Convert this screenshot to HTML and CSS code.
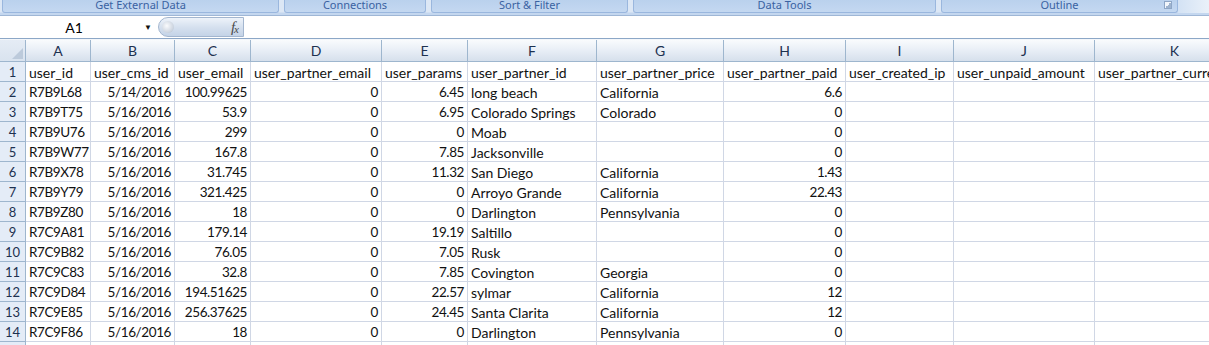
FILE: index.html
```html
<!DOCTYPE html>
<html lang="en">
<head>
    <meta charset="UTF-8">
    <title>Book1 - Sheet1</title>
    <link rel="stylesheet" href="styles.css">
</head>
<body>
    <div class="window">
        <div class="ribbon">
            <div class="group g1"><span>Get External Data</span></div>
            <div class="group g2"><span>Connections</span></div>
            <div class="group g3"><span>Sort &amp; Filter</span></div>
            <div class="group g4"><span>Data Tools</span></div>
            <div class="group g5">
                <span>Outline</span>
                <i class="launcher"></i>
            </div>
            <div class="ribbon-end"></div>
        </div>

        <div class="formula-bar">
            <div class="name-box">
                <span class="cell-ref">A1</span>
                <span class="drop">&#9660;</span>
            </div>
            <div class="fx-pill">
                <span class="bubble"></span>
                <span class="fx">f<sub>x</sub></span>
            </div>
            <div class="formula-input"></div>
        </div>

        <div class="sheet">
            <table class="grid">
                <colgroup>
                    <col class="w-hdr">
                    <col class="w-a">
                    <col class="w-b">
                    <col class="w-c">
                    <col class="w-d">
                    <col class="w-e">
                    <col class="w-f">
                    <col class="w-g">
                    <col class="w-h">
                    <col class="w-i">
                    <col class="w-j">
                    <col class="w-k">
                </colgroup>
                <thead>
                    <tr>
                        <th class="corner">
                            <svg width="11" height="11" viewBox="0 0 11 11"><polygon points="11,0 11,11 0,11" fill="#bccadb"/></svg>
                        </th>
                        <th>A</th><th>B</th><th>C</th><th>D</th><th>E</th><th>F</th>
                        <th>G</th><th>H</th><th>I</th><th>J</th><th>K</th>
                    </tr>
                </thead>
                <tbody>
                    <tr><th>1</th><td>user_id</td><td>user_cms_id</td><td>user_email</td><td>user_partner_email</td><td>user_params</td><td>user_partner_id</td><td>user_partner_price</td><td>user_partner_paid</td><td>user_created_ip</td><td>user_unpaid_amount</td><td class="clip">user_partner_currency</td></tr>
                    <tr><th>2</th><td class="id">R7B9L68</td><td class="num">5/14/2016</td><td class="num">100.99625</td><td class="num">0</td><td class="num">6.45</td><td>long beach</td><td>California</td><td class="num">6.6</td><td></td><td></td><td></td></tr>
                    <tr><th>3</th><td class="id">R7B9T75</td><td class="num">5/16/2016</td><td class="num">53.9</td><td class="num">0</td><td class="num">6.95</td><td>Colorado Springs</td><td>Colorado</td><td class="num">0</td><td></td><td></td><td></td></tr>
                    <tr><th>4</th><td class="id">R7B9U76</td><td class="num">5/16/2016</td><td class="num">299</td><td class="num">0</td><td class="num">0</td><td>Moab</td><td></td><td class="num">0</td><td></td><td></td><td></td></tr>
                    <tr><th>5</th><td class="id">R7B9W77</td><td class="num">5/16/2016</td><td class="num">167.8</td><td class="num">0</td><td class="num">7.85</td><td>Jacksonville</td><td></td><td class="num">0</td><td></td><td></td><td></td></tr>
                    <tr><th>6</th><td class="id">R7B9X78</td><td class="num">5/16/2016</td><td class="num">31.745</td><td class="num">0</td><td class="num">11.32</td><td>San Diego</td><td>California</td><td class="num">1.43</td><td></td><td></td><td></td></tr>
                    <tr><th>7</th><td class="id">R7B9Y79</td><td class="num">5/16/2016</td><td class="num">321.425</td><td class="num">0</td><td class="num">0</td><td>Arroyo Grande</td><td>California</td><td class="num">22.43</td><td></td><td></td><td></td></tr>
                    <tr><th>8</th><td class="id">R7B9Z80</td><td class="num">5/16/2016</td><td class="num">18</td><td class="num">0</td><td class="num">0</td><td>Darlington</td><td>Pennsylvania</td><td class="num">0</td><td></td><td></td><td></td></tr>
                    <tr><th>9</th><td class="id">R7C9A81</td><td class="num">5/16/2016</td><td class="num">179.14</td><td class="num">0</td><td class="num">19.19</td><td>Saltillo</td><td></td><td class="num">0</td><td></td><td></td><td></td></tr>
                    <tr><th>10</th><td class="id">R7C9B82</td><td class="num">5/16/2016</td><td class="num">76.05</td><td class="num">0</td><td class="num">7.05</td><td>Rusk</td><td></td><td class="num">0</td><td></td><td></td><td></td></tr>
                    <tr><th>11</th><td class="id">R7C9C83</td><td class="num">5/16/2016</td><td class="num">32.8</td><td class="num">0</td><td class="num">7.85</td><td>Covington</td><td>Georgia</td><td class="num">0</td><td></td><td></td><td></td></tr>
                    <tr><th>12</th><td class="id">R7C9D84</td><td class="num">5/16/2016</td><td class="num">194.51625</td><td class="num">0</td><td class="num">22.57</td><td>sylmar</td><td>California</td><td class="num">12</td><td></td><td></td><td></td></tr>
                    <tr><th>13</th><td class="id">R7C9E85</td><td class="num">5/16/2016</td><td class="num">256.37625</td><td class="num">0</td><td class="num">24.45</td><td>Santa Clarita</td><td>California</td><td class="num">12</td><td></td><td></td><td></td></tr>
                    <tr><th>14</th><td class="id">R7C9F86</td><td class="num">5/16/2016</td><td class="num">18</td><td class="num">0</td><td class="num">0</td><td>Darlington</td><td>Pennsylvania</td><td class="num">0</td><td></td><td></td><td></td></tr>
                    <tr><th>15</th><td></td><td></td><td></td><td></td><td></td><td></td><td></td><td></td><td></td><td></td><td></td></tr>
                </tbody>
            </table>
        </div>
    </div>
</body>
</html>
```

FILE: styles.css
```css
* {
    margin: 0;
    padding: 0;
    box-sizing: border-box;
}

html, body {
    width: 1209px;
    height: 345px;
    overflow: hidden;
    background: #ffffff;
}

body {
    font-family: Lato, 'Liberation Sans', sans-serif;
}

.window {
    width: 1209px;
    height: 345px;
    overflow: hidden;
}

/* ribbon group labels (bottom strip of the ribbon) */
.ribbon {
    display: flex;
    height: 16px;
    background: linear-gradient(#dce7f5 0, #dce7f5 12px, #c4d7ef 13px, #c4d7ef 15px, #9fb7d6 15px);
    padding-left: 2px;
}

.group {
    position: relative;
    height: 13px;
    margin-right: 5px;
    background: linear-gradient(#bad1ed, #c4d8f1);
    border: 1px solid #9ab7de;
    border-top: none;
    border-radius: 0 0 3px 3px;
    color: #3a62a2;
    font-family: 'Noto Sans', 'Liberation Sans', sans-serif;
    font-size: 11px;
    line-height: 9px;
    text-align: center;
    overflow: hidden;
}

.g1 { width: 277px; }
.g2 { width: 142px; }
.g3 { width: 197px; }
.g4 { width: 303px; }
.g5 { width: 237px; margin-right: 0; }

.launcher {
    position: absolute;
    right: 5px;
    top: 1px;
    width: 8px;
    height: 8px;
    border: 1px solid #8ea6c6;
    background: linear-gradient(135deg, #f2f6fb 50%, #9fb4cf 50%);
}

.ribbon-end {
    flex: 1;
    height: 13px;
    background: linear-gradient(90deg, #d3e2f4, #eaf1f9);
}

/* formula bar */
.formula-bar {
    display: flex;
    height: 23px;
    border-bottom: 1px solid #8ca7c7;
    background: #ffffff;
}

.name-box {
    display: flex;
    align-items: center;
    width: 156px;
    font-family: Lato, 'Liberation Sans', sans-serif;
    font-size: 14px;
    color: #000;
}

.cell-ref {
    flex: 1;
    text-align: center;
    padding-left: 4px;
}

.drop {
    font-size: 8px;
    color: #111;
    width: 12px;
}

.fx-pill {
    display: flex;
    align-items: center;
    justify-content: space-between;
    width: 86px;
    margin: 1px 0 1px 2px;
    padding: 0 5px 0 3px;
    border-radius: 11px 0 0 11px;
    border: 1px solid #a3b6cf;
    background: linear-gradient(#eef3fa, #d6e1ef 50%, #c4d3e7);
}

.bubble {
    width: 12px;
    height: 12px;
    border-radius: 50%;
    background: radial-gradient(circle at 40% 40%, #fafbfd, #cdd5e0 65%, #a9b5c6);
}

.fx {
    font-family: 'Liberation Serif', serif;
    font-style: italic;
    font-size: 15px;
    color: #4a4a4a;
    letter-spacing: -1px;
}

.fx sub {
    font-size: 11px;
    vertical-align: -1px;
}

.formula-input {
    flex: 1;
    background: #ffffff;
}

/* sheet grid */
.sheet {
    overflow: hidden;
    border-top: 1px solid #f3f6fa;
}

.grid {
    table-layout: fixed;
    border-collapse: separate;
    border-spacing: 0;
    width: 1255px;
    font-family: Lato, 'Liberation Sans', sans-serif;
    font-size: 14px;
    color: #111;
}

.w-hdr { width: 26px; }
.w-a { width: 65px; }
.w-b { width: 84px; }
.w-c { width: 76px; }
.w-d { width: 131px; }
.w-e { width: 86px; }
.w-f { width: 129px; }
.w-g { width: 127px; }
.w-h { width: 122px; }
.w-i { width: 108px; }
.w-j { width: 141px; }
.w-k { width: 160px; }

.grid thead th {
    height: 22px;
    font-weight: normal;
    text-align: center;
    color: #1d3150;
    background: linear-gradient(#f9fbfd, #e8eef6 50%, #d6e0ec);
    border-right: 1px solid #9eb6ce;
    border-bottom: 1px solid #9eb6ce;
    padding-top: 1px;
    line-height: 20px;
}

.grid thead th.corner {
    text-align: right;
    vertical-align: bottom;
    padding: 0 2px 2px 0;
    line-height: 0;
    background: linear-gradient(#e5ecf5, #d9e3ef);
}

.grid tbody th {
    height: 20px;
    font-weight: normal;
    font-size: 13px;
    text-align: center;
    color: #1d3150;
    background: #e4ecf7;
    border-right: 1px solid #9eb6ce;
    border-bottom: 1px solid #9eb6ce;
    padding-top: 2px;
    line-height: 17px;
}

.grid td {
    height: 20px;
    padding: 2px 3px 0;
    border-right: 1px solid #d0d7e5;
    border-bottom: 1px solid #d0d7e5;
    white-space: nowrap;
    overflow: hidden;
    line-height: 17px;
}

.grid td.num,
.grid td.id {
    font-size: 13.5px;
    letter-spacing: -0.4px;
}

.grid td.num {
    text-align: right;
}

.grid td.clip {
    text-overflow: clip;
}
```
